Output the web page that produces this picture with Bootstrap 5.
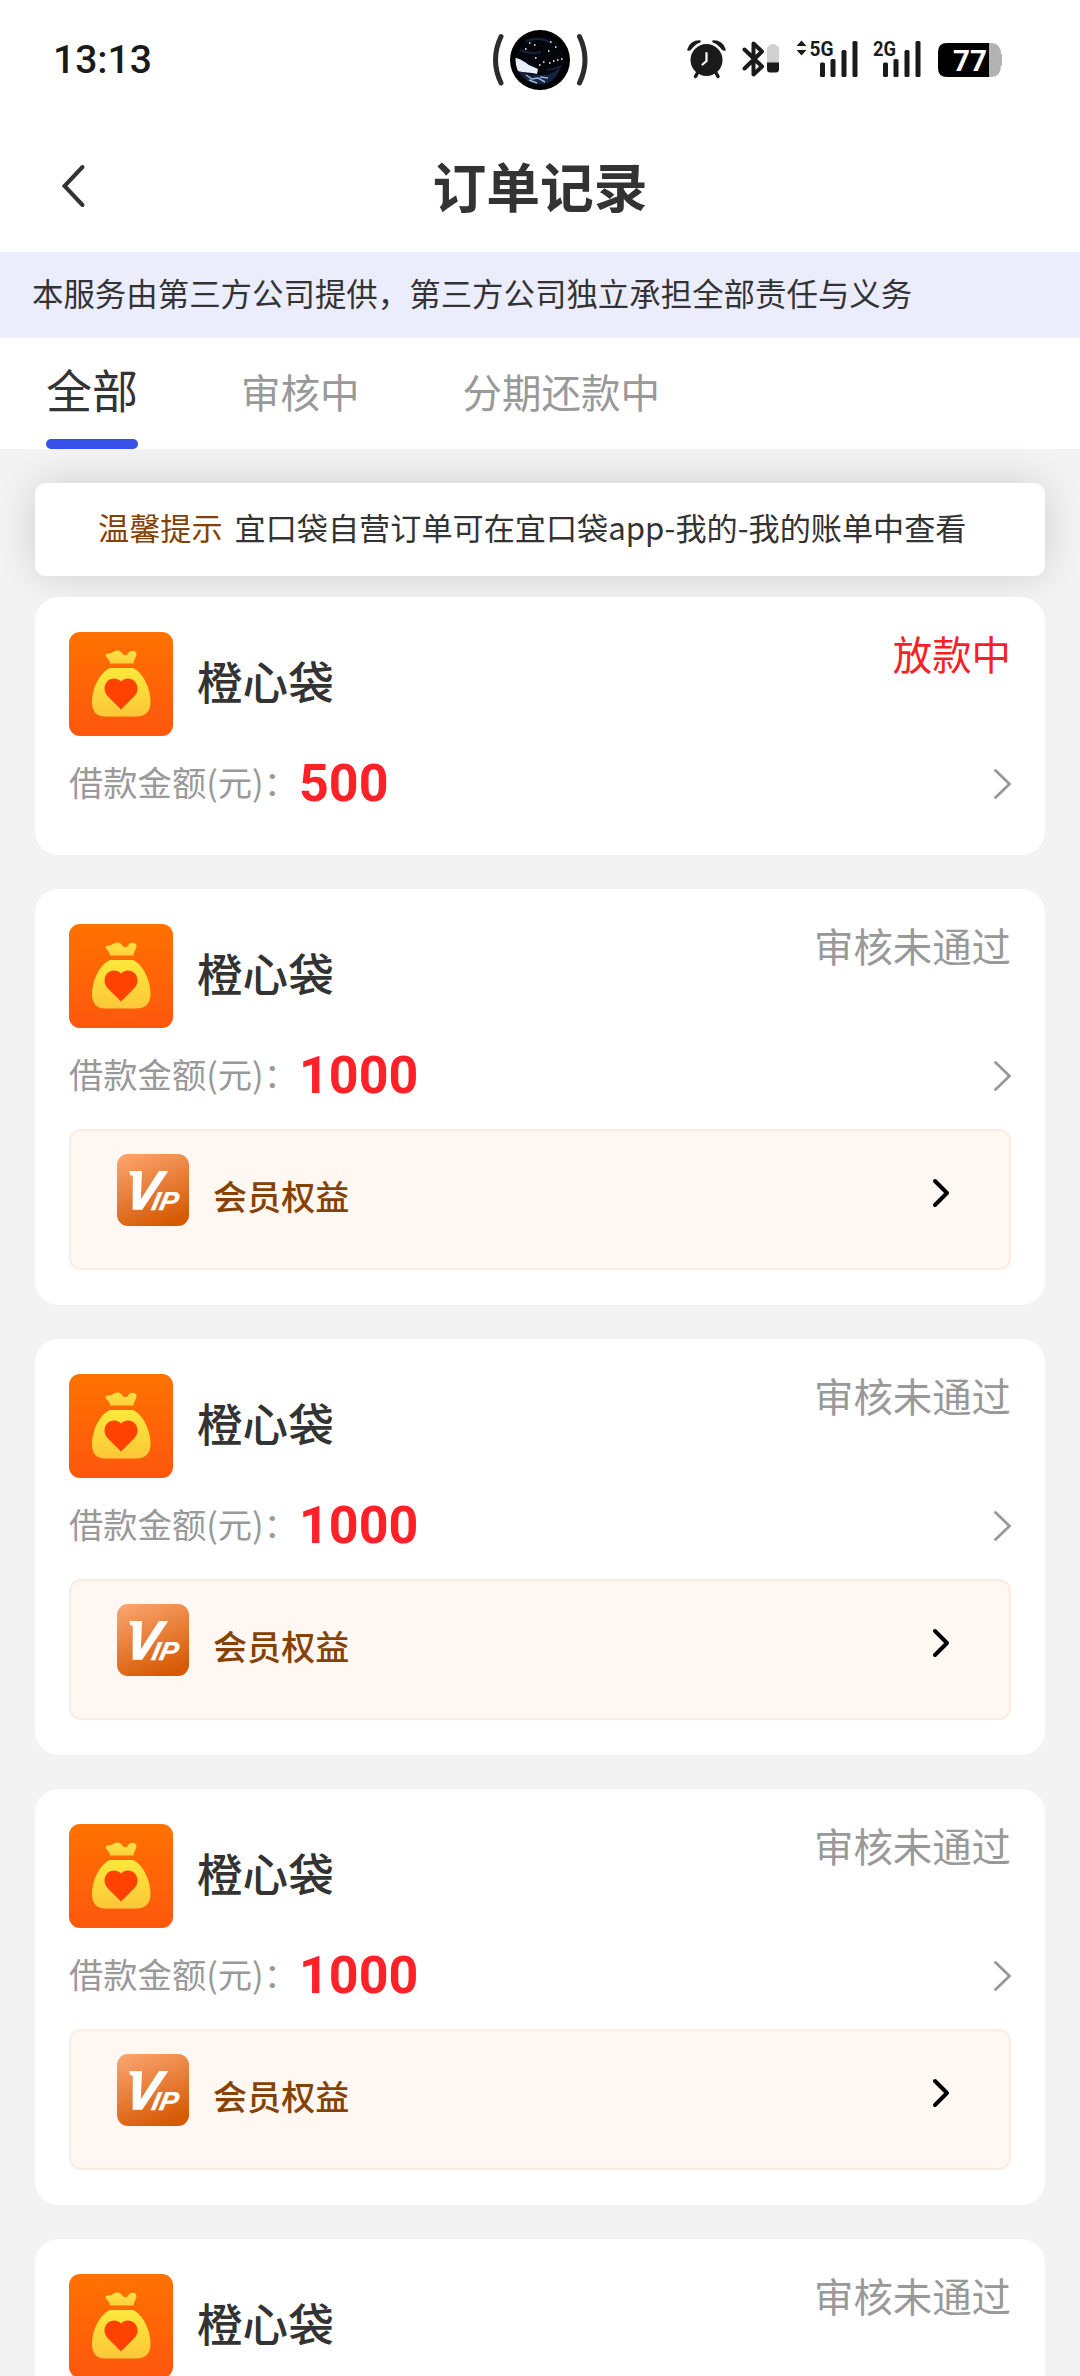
<!DOCTYPE html>
<html lang="zh-CN">
<head>
<meta charset="utf-8">
<meta name="viewport" content="width=device-width, initial-scale=1">
<title>订单记录</title>
<link href="https://cdn.jsdelivr.net/npm/bootstrap@5.3.0/dist/css/bootstrap.min.css" rel="stylesheet">
<style>
  body { font-family: Roboto, "Noto Sans CJK SC", sans-serif; background: #f3f3f3; color: #333; height: 2376px; overflow: hidden; line-height: 1.4; }
  svg { display: block; flex: none; }
  .cjk { font-family: "Noto Sans CJK SC", sans-serif; white-space: nowrap; }
  .statusbar { height: 120px; padding: 0 78px 0 53px; }
  .clock { font: 500 39px/1 Roboto, sans-serif; color: #1a1a1a; }
  .titlebar { height: 132px; padding: 0 61px; }
  .page-title { font-size: 53.8px; line-height: 60px; font-weight: 700; padding-bottom: 2px; }
  .notice { height: 86px; background: #ebedfd; padding: 0 32px 3px; font-size: 31.45px; }
  .tabs { height: 111px; padding-left: 46px; gap: 103px; font-size: 39.5px; color: #999; }
  .tabs .nav-link { padding: 0; line-height: 106px; color: #999; }
  .tabs .nav-link.active { font-size: 46px; color: #333; width: 92px; position: relative; line-height: 101px; }
  .tabs .nav-link.active::after { content: ""; position: absolute; left: 0; right: 0; bottom: 0; height: 10px; border-radius: 5px; background: #3551e8; }
  .list-area { padding: 34px 35px 0; }
  .tip { height: 93px; border-radius: 10px; box-shadow: 0 0 40px rgba(0,0,0,.15); font-size: 31.15px; margin-bottom: 21px; padding: 0 0 5px 63px; gap: 12px; }
  .tip-label { color: #854204; }
  .order { border-radius: 24px; padding: 35px 34px 0; margin-bottom: 34px; height: 416px; }
  .order.short { height: 258px; }
  .order.cut { height: 137px; margin-bottom: 0; border-radius: 24px 24px 0 0; overflow: hidden; }
  .order-name { font-size: 45.6px; font-weight: 500; margin: 0 0 6px 24px; }
  .order-state { font-size: 39.4px; line-height: 42px; color: #999; }
  .order-state.paying { color: #f91f26; }
  .amount-row { height: 96px; }
  .amount-label { font-size: 34.3px; color: #999; width: 230px; padding-bottom: 5px; }
  .amount-num { font: 700 52px/1 Roboto, sans-serif; color: #ff2128; }
  .vip { height: 141px; border: 2px solid #fcebe1; border-radius: 12px; background: #fff7f1; padding: 23px 59px 0 46px; margin-top: 5px; }
  .vip-label { font-size: 34.1px; font-weight: 500; color: #854204; margin: 0 0 0 24px; line-height: 82px; }
</style>
<script src="https://cdn.jsdelivr.net/npm/bootstrap@5.3.0/dist/js/bootstrap.bundle.min.js"></script>
</head>
<body>
<svg width="0" height="0" class="position-absolute" aria-hidden="true">
  <defs>
    <linearGradient id="gOrange" x1="0" y1="0" x2="0" y2="1"><stop offset="0" stop-color="#ff7200"/><stop offset="1" stop-color="#ff570e"/></linearGradient>
    <linearGradient id="gBag" x1="0" y1="0" x2="0" y2="1"><stop offset="0" stop-color="#ffe83b"/><stop offset="1" stop-color="#fcc739"/></linearGradient>
    <linearGradient id="gNeck" x1="0" y1="0" x2="0" y2="1"><stop offset="0" stop-color="#ffe342"/><stop offset="1" stop-color="#ffcf3c"/></linearGradient>
    <linearGradient id="gVip" x1=".2" y1="0" x2=".6" y2="1"><stop offset="0" stop-color="#faa26c"/><stop offset="1" stop-color="#d65a04"/></linearGradient>
    <symbol id="bag" viewBox="0 0 104 104">
      <rect width="104" height="104" rx="11" fill="url(#gOrange)"/>
      <path d="M37 24.500C35 21.500 40 21.500 42.500 21C46 18 50 17.500 52.500 20.500C55 24 57.500 24 59.500 21C61.500 17.500 67.500 18.500 67.500 22C67.500 25 65 27 64.500 31.500H41C41 28 38.500 26.500 37 24.500Z" fill="url(#gNeck)"/>
      <path d="M41 36H64C75 41 81.500 58 81.500 70C81.500 80 76 84.500 67 84.500H36C27 84.500 23 79 23 70C23 57 30 41 41 36Z" fill="url(#gBag)"/>
      <path d="M52 77.500L38.500 64C34.500 60 34.500 53 38.500 49C42 45.500 48.500 45.500 52 49.500C55.500 45.500 62 45.500 65.500 49C69.500 53 69.500 60 65.500 64Z" fill="#ff4200"/>
    </symbol>
    <symbol id="vip" viewBox="0 0 72 72">
      <rect width="72" height="72" rx="11" fill="url(#gVip)"/>
      <g font-family="Liberation Sans, sans-serif" font-weight="700" font-style="italic" fill="#fff" stroke="#fff">
        <text transform="translate(6.500 55) skewX(-9)" font-size="54" textLength="34" lengthAdjust="spacingAndGlyphs" stroke-width="1.500">V</text>
        <text transform="translate(33.500 55.500) skewX(-12)" font-size="26" textLength="26" lengthAdjust="spacingAndGlyphs" stroke-width=".3">IP</text>
      </g>
      <path d="M12 17H23V21.500H13.500Z" fill="#fff"/>
    </symbol>
    <symbol id="goGray" viewBox="0 0 20 32"><path d="M4.500 2.500L18.500 16L4.500 29.500" fill="none" stroke="#999" stroke-width="2.800" stroke-linecap="round"/></symbol>
    <symbol id="goBlack" viewBox="0 0 18 30"><path d="M3 3L15 15L3 27" fill="none" stroke="#000" stroke-width="4" stroke-linecap="round" stroke-linejoin="round"/></symbol>
  </defs>
</svg>

<header class="bg-white">
  <div class="statusbar d-flex align-items-center justify-content-between position-relative">
    <span class="clock">13:13</span>
    <svg class="position-absolute top-0 start-50 translate-middle-x" width="100" height="120" viewBox="490 0 100 120">
      <defs><clipPath id="lens"><circle cx="540" cy="60" r="24.500"/></clipPath><filter id="soft"><feGaussianBlur stdDeviation=".6"/></filter></defs>
      <path d="M501 36.500Q490 60 501 83M579.500 36.500Q590.500 60 579.500 83" fill="none" stroke="#2c2c2c" stroke-width="5" stroke-linecap="round"/>
      <circle cx="540" cy="60" r="30" fill="#000"/>
      <g clip-path="url(#lens)">
        <circle cx="540" cy="60" r="25" fill="#04060b"/>
        <g filter="url(#soft)">
          <path d="M518 70C528 76 536 75 545 75C553 74 556 70 560 68C558 76 550 85 540 85C530 84 522 79 518 70Z" fill="#14243f"/>
          <path d="M513 57C521 59 525 62 529 65L538 69L537 74C530 72 525 73 517 71Z" fill="#e9effa"/>
          <path d="M526 75L532 79L538 78L545 82M529 80L537 83M540 77L548 78" stroke="#9bb6dc" stroke-width="1.500" fill="none"/>
          <path d="M526 41Q540 36 552 43M520 50Q530 55 541 52M547 70Q556 69 561 66" stroke="#17233a" stroke-width="2" fill="none"/>
        </g>
        <path d="M529 43h1.500M525 49h1.500M548 51h1.500M535 58h1.500M543 62h1.500M549 63h1.500M553 61h1.500M557 60h1.500M561 59h1.500M539 65h1.500M555 47h1.500M534 45h1.500M550 42h1.500" stroke="#fff" stroke-width="1.300"/>
      </g>
    </svg>
    <svg width="316" height="44" viewBox="686 38 316 44">
      <g fill="#1a1a1a">
        <circle cx="706.500" cy="60" r="16"/>
        <path d="M688.500 49.500A11 11 0 0 1 699.500 41.500Q695 42.500 690 49ZM724.500 49.500A11 11 0 0 0 713.500 41.500Q718 42.500 723 49Z" stroke="#1a1a1a" stroke-width="2.500" stroke-linejoin="round"/>
        <path d="M698 72L695.500 76.500M715.500 72L718 76.500" stroke="#1a1a1a" stroke-width="3.500" stroke-linecap="round"/>
      </g>
      <path d="M706.500 53V61L702.500 64.500" fill="none" stroke="#fff" stroke-width="2.200" stroke-linecap="round"/>
      <path d="M744.500 49.500L762 66.500L753.500 74.500V43.500L762 51.500L744.500 68.500" fill="none" stroke="#1a1a1a" stroke-width="4" stroke-linecap="round" stroke-linejoin="round"/>
      <path d="M767 64V49Q767 45.500 770 45.500L771 44H775L776 45.500Q779 45.500 779 49V64Z" fill="#d0d0d0"/>
      <path d="M767 62.500H779V69Q779 72.500 776 72.500H770Q767 72.500 767 69Z" fill="#1a1a1a"/>
      <path d="M801.500 40.500L806.500 46H796.500ZM801.500 55.500L796.500 50H806.500Z" fill="#1a1a1a"/>
      <g font-family="Roboto, sans-serif" font-weight="700" font-size="21" fill="#1a1a1a">
        <text x="809.500" y="55.500" textLength="24" lengthAdjust="spacingAndGlyphs">5G</text>
        <text x="873" y="55.500" textLength="23" lengthAdjust="spacingAndGlyphs">2G</text>
      </g>
      <g fill="#1a1a1a">
        <rect x="820" y="62.500" width="5" height="14.500" rx="1.500"/><rect x="830.500" y="59" width="5" height="18" rx="1.500"/><rect x="841.500" y="50" width="5" height="27" rx="1.500"/><rect x="852.500" y="41" width="5" height="36" rx="1.500"/>
        <rect x="883" y="62.500" width="5" height="14.500" rx="1.500"/><rect x="893.500" y="59" width="5" height="18" rx="1.500"/><rect x="904.500" y="50" width="5" height="27" rx="1.500"/><rect x="915.500" y="41" width="5" height="36" rx="1.500"/>
      </g>
      <path d="M989 43H992Q1001 44 1001 54H1003Q1004 54 1004 60T1003 65.500H1001Q1001 76 992 77H989Z" fill="#b2b2b2"/>
      <path d="M989 43V77H947Q938 77 938 68V52Q938 43 947 43Z" fill="#000"/>
      <text x="953" y="71" font-family="Roboto, sans-serif" font-weight="700" font-size="29" textLength="34" lengthAdjust="spacingAndGlyphs" fill="#fff">77</text>
    </svg>
  </div>
  <div class="titlebar d-flex align-items-center position-relative">
    <svg width="26" height="44" viewBox="0 0 26 44"><path d="M21.500 3L3.500 22L21.500 41" fill="none" stroke="#333" stroke-width="4" stroke-linecap="round"/></svg>
    <h1 class="page-title cjk position-absolute start-50 translate-middle-x mb-0">订单记录</h1>
  </div>
</header>
<div class="notice cjk d-flex align-items-center">本服务由第三方公司提供，第三方公司独立承担全部责任与义务</div>
<nav class="tabs nav cjk bg-white flex-nowrap">
  <a class="nav-link active">全部</a>
  <a class="nav-link">审核中</a>
  <a class="nav-link">分期还款中</a>
</nav>

<main class="list-area">
  <div class="tip cjk bg-white d-flex align-items-center"><span class="tip-label">温馨提示</span><span>宜口袋自营订单可在宜口袋app-我的-我的账单中查看</span></div>

  <section class="order short bg-white">
    <div class="d-flex align-items-center">
      <svg width="104" height="104"><use href="#bag"/></svg>
      <div class="order-name cjk">橙心袋</div>
      <div class="order-state paying cjk ms-auto align-self-start">放款中</div>
    </div>
    <div class="amount-row d-flex align-items-center">
      <span class="amount-label cjk">借款金额(元)：</span><span class="amount-num">500</span>
      <svg width="20" height="32" class="ms-auto"><use href="#goGray"/></svg>
    </div>
  </section>

  <section class="order bg-white">
    <div class="d-flex align-items-center">
      <svg width="104" height="104"><use href="#bag"/></svg>
      <div class="order-name cjk">橙心袋</div>
      <div class="order-state cjk ms-auto align-self-start">审核未通过</div>
    </div>
    <div class="amount-row d-flex align-items-center">
      <span class="amount-label cjk">借款金额(元)：</span><span class="amount-num">1000</span>
      <svg width="20" height="32" class="ms-auto"><use href="#goGray"/></svg>
    </div>
    <div class="vip d-flex align-items-start">
      <svg width="72" height="72"><use href="#vip"/></svg>
      <div class="vip-label cjk">会员权益</div>
      <svg width="18" height="30" class="ms-auto mt-4"><use href="#goBlack"/></svg>
    </div>
  </section>

  <section class="order bg-white">
    <div class="d-flex align-items-center">
      <svg width="104" height="104"><use href="#bag"/></svg>
      <div class="order-name cjk">橙心袋</div>
      <div class="order-state cjk ms-auto align-self-start">审核未通过</div>
    </div>
    <div class="amount-row d-flex align-items-center">
      <span class="amount-label cjk">借款金额(元)：</span><span class="amount-num">1000</span>
      <svg width="20" height="32" class="ms-auto"><use href="#goGray"/></svg>
    </div>
    <div class="vip d-flex align-items-start">
      <svg width="72" height="72"><use href="#vip"/></svg>
      <div class="vip-label cjk">会员权益</div>
      <svg width="18" height="30" class="ms-auto mt-4"><use href="#goBlack"/></svg>
    </div>
  </section>

  <section class="order bg-white">
    <div class="d-flex align-items-center">
      <svg width="104" height="104"><use href="#bag"/></svg>
      <div class="order-name cjk">橙心袋</div>
      <div class="order-state cjk ms-auto align-self-start">审核未通过</div>
    </div>
    <div class="amount-row d-flex align-items-center">
      <span class="amount-label cjk">借款金额(元)：</span><span class="amount-num">1000</span>
      <svg width="20" height="32" class="ms-auto"><use href="#goGray"/></svg>
    </div>
    <div class="vip d-flex align-items-start">
      <svg width="72" height="72"><use href="#vip"/></svg>
      <div class="vip-label cjk">会员权益</div>
      <svg width="18" height="30" class="ms-auto mt-4"><use href="#goBlack"/></svg>
    </div>
  </section>

  <section class="order cut bg-white">
    <div class="d-flex align-items-center">
      <svg width="104" height="104"><use href="#bag"/></svg>
      <div class="order-name cjk">橙心袋</div>
      <div class="order-state cjk ms-auto align-self-start">审核未通过</div>
    </div>
  </section>
</main>
</body>
</html>
